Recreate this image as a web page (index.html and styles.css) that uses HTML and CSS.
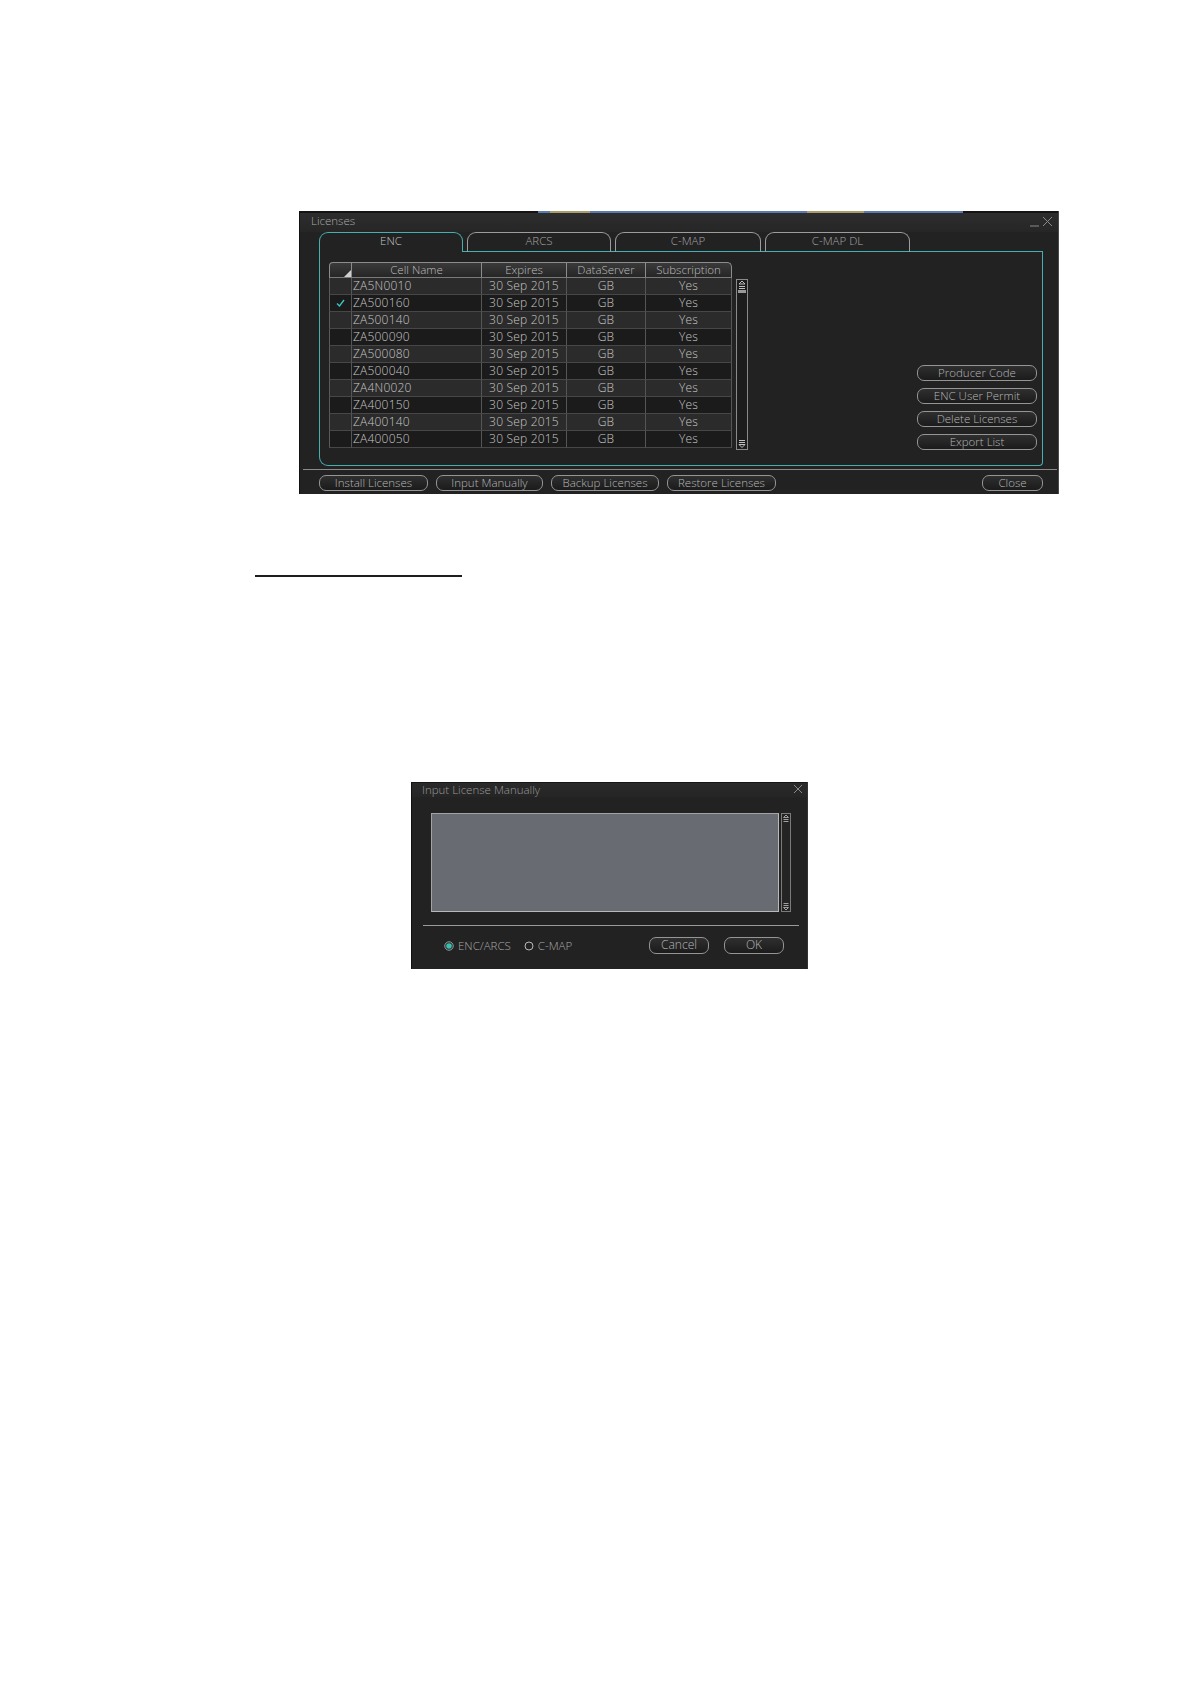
FILE: index.html
```html
<!DOCTYPE html>
<html>
<head>
<meta charset="utf-8">
<title>Licenses</title>
<link rel="stylesheet" href="styles.css">
</head>
<body>
<div class="page">
  <section class="win licenses">
    <div class="strip">
      <span class="seg off"></span>
      <span class="seg blue w12"></span>
      <span class="seg khaki w40"></span>
      <span class="seg blue w217"></span>
      <span class="seg khaki w57"></span>
      <span class="seg blue w99"></span>
    </div>
    <div class="titlebar">
      <span class="title">Licenses</span>
      <svg class="winctl" width="26" height="12" viewBox="0 0 26 12"><line x1="1" y1="11" x2="10" y2="11" stroke="#8a8a8a" stroke-width="1"/><line x1="14" y1="2" x2="23" y2="11" stroke="#8a8a8a" stroke-width="1"/><line x1="23" y1="2" x2="14" y2="11" stroke="#8a8a8a" stroke-width="1"/></svg>
    </div>
    <div class="lic-body">
      <div class="tabs">
        <div class="tab active">ENC</div>
        <div class="tab">ARCS</div>
        <div class="tab wide">C-MAP</div>
        <div class="tab wide2">C-MAP DL</div>
      </div>
      <div class="panel">
        <div class="grid">
          <div class="row head">
            <div class="cell corner"><svg width="7" height="7" viewBox="0 0 7 7"><polygon points="7,0 7,7 0,7" fill="#cfcfcf"/></svg></div>
            <div class="cell">Cell Name</div>
            <div class="cell">Expires</div>
            <div class="cell">DataServer</div>
            <div class="cell last">Subscription</div>
          </div>
          <div class="row"><div class="cell chk"></div><div class="cell name">ZA5N0010</div><div class="cell">30 Sep 2015</div><div class="cell">GB</div><div class="cell">Yes</div></div>
          <div class="row"><div class="cell chk"><svg width="9" height="8" viewBox="0 0 9 8"><polyline points="1,4.5 3.5,7 8,1" fill="none" stroke="#3ec6c6" stroke-width="1.3"/></svg></div><div class="cell name">ZA500160</div><div class="cell">30 Sep 2015</div><div class="cell">GB</div><div class="cell">Yes</div></div>
          <div class="row"><div class="cell chk"></div><div class="cell name">ZA500140</div><div class="cell">30 Sep 2015</div><div class="cell">GB</div><div class="cell">Yes</div></div>
          <div class="row"><div class="cell chk"></div><div class="cell name">ZA500090</div><div class="cell">30 Sep 2015</div><div class="cell">GB</div><div class="cell">Yes</div></div>
          <div class="row"><div class="cell chk"></div><div class="cell name">ZA500080</div><div class="cell">30 Sep 2015</div><div class="cell">GB</div><div class="cell">Yes</div></div>
          <div class="row"><div class="cell chk"></div><div class="cell name">ZA500040</div><div class="cell">30 Sep 2015</div><div class="cell">GB</div><div class="cell">Yes</div></div>
          <div class="row"><div class="cell chk"></div><div class="cell name">ZA4N0020</div><div class="cell">30 Sep 2015</div><div class="cell">GB</div><div class="cell">Yes</div></div>
          <div class="row"><div class="cell chk"></div><div class="cell name">ZA400150</div><div class="cell">30 Sep 2015</div><div class="cell">GB</div><div class="cell">Yes</div></div>
          <div class="row"><div class="cell chk"></div><div class="cell name">ZA400140</div><div class="cell">30 Sep 2015</div><div class="cell">GB</div><div class="cell">Yes</div></div>
          <div class="row"><div class="cell chk"></div><div class="cell name">ZA400050</div><div class="cell">30 Sep 2015</div><div class="cell">GB</div><div class="cell">Yes</div></div>
        </div>
        <div class="vscroll">
          <svg width="10" height="14" viewBox="0 0 10 14"><polygon points="5,1 8,4 2,4" fill="none" stroke="#c0c0c0" stroke-width="1"/><line x1="2" y1="6.5" x2="8" y2="6.5" stroke="#c0c0c0"/><line x1="2" y1="8.5" x2="8" y2="8.5" stroke="#c0c0c0"/><rect x="1" y="10" width="8" height="3" fill="#9a9a9a"/></svg>
          <svg width="10" height="10" viewBox="0 0 10 10"><line x1="2" y1="1.5" x2="8" y2="1.5" stroke="#c0c0c0"/><line x1="2" y1="3.5" x2="8" y2="3.5" stroke="#c0c0c0"/><polygon points="2,5.5 8,5.5 5,8.5" fill="none" stroke="#c0c0c0" stroke-width="1"/></svg>
        </div>
        <div class="side">
          <div class="btn side-btn">Producer Code</div>
          <div class="btn side-btn">ENC User Permit</div>
          <div class="btn side-btn">Delete Licenses</div>
          <div class="btn side-btn">Export List</div>
        </div>
      </div>
    </div>
    <div class="sep"></div>
    <div class="actions">
      <div class="btn w109">Install Licenses</div>
      <div class="btn w107">Input Manually</div>
      <div class="btn w108">Backup Licenses</div>
      <div class="btn w109">Restore Licenses</div>
      <div class="btn close">Close</div>
    </div>
  </section>

  <div class="rule"></div>

  <section class="win dialog">
    <div class="titlebar small">
      <span class="title">Input License Manually</span>
      <svg class="winctl" width="10" height="10" viewBox="0 0 10 10"><line x1="1" y1="1" x2="9" y2="9" stroke="#8a8a8a"/><line x1="9" y1="1" x2="1" y2="9" stroke="#8a8a8a"/></svg>
    </div>
    <div class="entry">
      <div class="textarea"></div>
      <div class="vscroll small">
        <svg width="8" height="10" viewBox="0 0 8 10"><polygon points="4,1 6.5,3.5 1.5,3.5" fill="none" stroke="#a0a0a0"/><line x1="1.5" y1="5.5" x2="6.5" y2="5.5" stroke="#a0a0a0"/><line x1="1.5" y1="7.5" x2="6.5" y2="7.5" stroke="#a0a0a0"/></svg>
        <svg width="8" height="10" viewBox="0 0 8 10"><line x1="1.5" y1="2.5" x2="6.5" y2="2.5" stroke="#a0a0a0"/><line x1="1.5" y1="4.5" x2="6.5" y2="4.5" stroke="#a0a0a0"/><polygon points="1.5,6.5 6.5,6.5 4,9" fill="none" stroke="#a0a0a0"/></svg>
      </div>
    </div>
    <div class="sep dlg-sep"></div>
    <div class="dlg-actions">
      <svg class="radio" width="10" height="10" viewBox="0 0 10 10"><circle cx="5" cy="5" r="4.2" fill="#1d1d1d" stroke="#9aa6a6" stroke-width="1"/><circle cx="5" cy="5" r="2.8" fill="#38c0b0"/></svg>
      <span class="rlabel">ENC/ARCS</span>
      <svg class="radio" width="10" height="10" viewBox="0 0 10 10"><circle cx="5" cy="5" r="4" fill="none" stroke="#b8b8b8" stroke-width="1"/></svg>
      <span class="rlabel">C-MAP</span>
      <div class="btn dbtn cancel">Cancel</div>
      <div class="btn dbtn">OK</div>
    </div>
  </section>
</div>
</body>
</html>
```

FILE: styles.css
```css
* {
  box-sizing: border-box;
}

html,
body {
  margin: 0;
  padding: 0;
  background: #ffffff;
}

body {
  font-family: "Open Sans", "Noto Sans", "Liberation Sans", sans-serif;
  font-size: 11.5px;
  font-weight: 300;
  color: #bdbdbd;
}

.page {
  padding-top: 211px;
  min-height: 1684px;
}

.win {
  background: #222222;
  display: flex;
  flex-direction: column;
}

/* ---------- Licenses window ---------- */
.licenses {
  margin-left: 299px;
  width: 760px;
  height: 283px;
  border-left: 1px solid #121212;
  border-right: 1px solid #4a4a4a;
}

.strip {
  height: 2px;
  display: flex;
  background: #141414;
  flex: none;
}

.seg { display: block; height: 2px; }
.seg.off { width: 238px; }
.seg.blue { background: #5b7ab0; }
.seg.khaki { background: #a89e6c; }
.w12 { width: 12px; }
.w40 { width: 40px; }
.w217 { width: 217px; }
.w57 { width: 57px; }
.w99 { width: 99px; }

.titlebar {
  height: 19px;
  flex: none;
  display: flex;
  align-items: flex-start;
  padding-left: 11px;
  background: linear-gradient(#2d2d2d, #262626);
}

.title {
  color: #a9a9a9;
  line-height: 15px;
}

.winctl {
  margin-left: auto;
  margin-right: 3px;
  margin-top: 2px;
}

.lic-body {
  padding: 0 15px 0 19px;
  flex: none;
}

.tabs {
  display: flex;
  gap: 4px;
  height: 20px;
  background: linear-gradient(#46b0b0, #46b0b0) left bottom / 100% 1px no-repeat;
}

.tab {
  width: 144px;
  height: 20px;
  border: 1px solid #9d9d9d;
  border-bottom: none;
  border-radius: 9px 9px 0 0;
  text-align: center;
  line-height: 16px;
  color: #a6a6a6;
}

.tab.wide { width: 146px; }
.tab.wide2 { width: 145px; }

.tab.active {
  border-color: #46b0b0;
  background: #222222;
  color: #c4c4c4;
}

.panel {
  height: 214px;
  border: 1px solid #46b0b0;
  border-top: none;
  border-radius: 0 0 4px 9px;
  padding: 10px 5px 15px 9px;
  display: flex;
  align-items: flex-start;
}

.grid {
  width: 403px;
  flex: none;
}

.row {
  display: grid;
  grid-template-columns: 23px 130px 85px 79px 86px;
  height: 17px;
  background: #1b1b1b;
}

.row:nth-child(even) {
  background: #2b2b2b;
}

.cell {
  font-size: 12px;
  line-height: 15px;
  text-align: center;
  color: #c6c6c6;
  border-right: 1px solid #555555;
  border-bottom: 1px solid #474747;
  white-space: nowrap;
  overflow: hidden;
  letter-spacing: 0.2px;
}

.cell.chk {
  border-left: 1px solid #5a5a5a;
  display: flex;
  align-items: center;
  justify-content: center;
}

.cell.name {
  text-align: left;
  padding-left: 1px;
}

.row.head {
  height: 16px;
  background: transparent;
}

.row.head .cell {
  background: linear-gradient(#3a3a3a, #262626);
  border-top: 1px solid #8c8c8c;
  border-right: 1px solid #8c8c8c;
  border-bottom: 1px solid #7a7a7a;
  line-height: 14px;
  font-size: 11.5px;
  color: #bcbcbc;
  letter-spacing: 0;
}

.row.head .corner {
  border-left: 1px solid #8c8c8c;
  border-top-left-radius: 4px;
  display: flex;
  align-items: flex-end;
  justify-content: flex-end;
}

.row.head .last {
  border-top-right-radius: 5px;
}

.vscroll {
  width: 12px;
  height: 171px;
  margin-left: 4px;
  margin-top: 17px;
  border: 1px solid #8a8a8a;
  background: #1d1d1d;
  display: flex;
  flex-direction: column;
  justify-content: space-between;
  align-items: center;
  flex: none;
}

.side {
  margin-left: auto;
  align-self: flex-end;
  display: flex;
  flex-direction: column;
  gap: 7px;
}

.btn {
  height: 16px;
  border: 1px solid #959595;
  border-radius: 7px;
  background: linear-gradient(#2f2f2f, #1b1b1b);
  color: #b6b6b6;
  font-size: 11.5px;
  line-height: 13px;
  text-align: center;
  white-space: nowrap;
  flex: none;
}

.side-btn { width: 120px; }

.sep {
  height: 1px;
  background: #8a8a8a;
  margin: 3px 1px 0 3px;
  flex: none;
}

.actions {
  display: flex;
  gap: 8px;
  margin-top: 5px;
  padding: 0 15px 0 19px;
}

.w109 { width: 109px; }
.w107 { width: 107px; }
.w108 { width: 108px; }

.btn.close {
  width: 61px;
  margin-left: auto;
}

/* ---------- separator rule ---------- */
.rule {
  margin-left: 255px;
  margin-top: 81px;
  width: 207px;
  height: 2px;
  background: #1e1e1e;
}

/* ---------- Input License Manually dialog ---------- */
.dialog {
  margin-left: 411px;
  margin-top: 205px;
  width: 397px;
  height: 187px;
  border-left: 1px solid #111111;
  border-right: 1px solid #333333;
}

.titlebar.small {
  height: 15px;
  padding-left: 10px;
  background: linear-gradient(#2a2a2a, #252525);
  border-top: 1px solid #151515;
}

.titlebar.small .title {
  color: #9a9a9a;
  line-height: 13px;
}

.titlebar.small .winctl {
  margin-right: 4px;
  margin-top: 1px;
}

.entry {
  display: flex;
  gap: 2px;
  margin-top: 16px;
  padding-left: 19px;
}

.textarea {
  width: 348px;
  height: 99px;
  background: #686b71;
  border: 1px solid #a2a2a2;
  border-right-color: #b8b8b8;
  border-bottom-color: #b8b8b8;
}

.vscroll.small {
  width: 10px;
  height: 99px;
  margin: 0;
  border-color: #7a7a7a;
  background: #242424;
}

.dlg-sep {
  margin: 13px 8px 0 11px;
  background: #9a9a9a;
}

.dlg-actions {
  display: flex;
  align-items: center;
  margin-top: 11px;
  height: 17px;
  padding: 0 23px 0 32px;
}

.radio {
  flex: none;
}

.rlabel {
  color: #a8a8a8;
  margin-left: 4px;
  margin-right: 13px;
}

.dbtn {
  width: 60px;
  height: 17px;
  line-height: 14px;
  font-size: 12px;
}

.dbtn.cancel {
  margin-left: auto;
  margin-right: 15px;
}
```
